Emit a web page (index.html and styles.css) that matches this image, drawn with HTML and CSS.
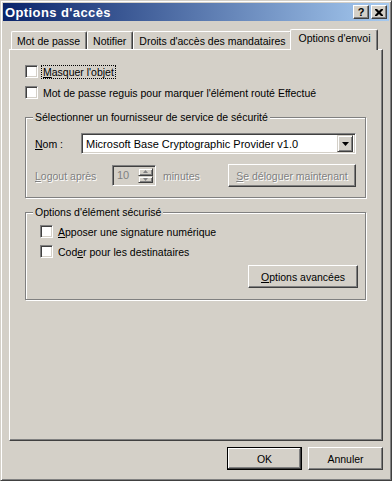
FILE: index.html
```html
<!DOCTYPE html>
<html lang="fr">
<head>
    <meta charset="UTF-8">
    <meta name="viewport" content="width=device-width, initial-scale=1.0">
    <title>Options d'accès</title>
    <link rel="stylesheet" href="styles.css">
</head>
<body>
    <div class="window">
        <div class="titlebar">
            <span class="title">Options d'accès</span>
            <div class="title-buttons">
                <span class="tbtn help">?</span>
                <span class="tbtn">
                    <svg width="8" height="7" viewBox="0 0 8 7"><path d="M0 0h2l2 2 2-2h2v1l-2.5 2.5 2.5 2.5v1h-2l-2-2-2 2h-2v-1l2.5-2.5-2.5-2.5z" fill="#000"/></svg>
                </span>
            </div>
        </div>

        <div class="dialog">
            <div class="tabs">
                <div class="tab">Mot de passe</div>
                <div class="tab">Notifier</div>
                <div class="tab">Droits d'accès des mandataires</div>
                <div class="tab active">Options d'envoi</div>
            </div>

            <div class="panel">
                <label class="check">
                    <span class="box"></span>
                    <span class="focus"><u>M</u>asquer l'objet</span>
                </label>
                <label class="check second">
                    <span class="box"></span>
                    <span>Mot de passe reguis pour marquer l'élément routé Effectué</span>
                </label>

                <fieldset class="group provider">
                    <legend>Sélectionner un fournisseur de service de sécurité</legend>
                    <div class="group-body">
                        <div class="row">
                            <span class="lbl name-lbl"><u>N</u>om :</span>
                            <div class="combo">
                                <span class="combo-text">Microsoft Base Cryptographic Provider v1.0</span>
                                <span class="combo-btn">
                                    <svg width="7" height="4" viewBox="0 0 7 4"><path d="M0 0h7l-3.5 4z" fill="#000"/></svg>
                                </span>
                            </div>
                        </div>
                        <div class="row logout">
                            <span class="lbl logout-lbl disabled"><u>L</u>ogout après</span>
                            <div class="spin">
                                <span class="spin-text">10</span>
                                <span class="spin-btns">
                                    <span class="sb"><svg width="5" height="3" viewBox="0 0 5 3"><path d="M2.5 0l2.5 3h-5z" fill="#808080"/></svg></span>
                                    <span class="sb"><svg width="5" height="3" viewBox="0 0 5 3"><path d="M0 0h5l-2.5 3z" fill="#808080"/></svg></span>
                                </span>
                            </div>
                            <span class="minutes disabled">minutes</span>
                            <button class="btn logout-btn disabled"><u>S</u>e déloguer maintenant</button>
                        </div>
                    </div>
                </fieldset>

                <fieldset class="group secure">
                    <legend>Options d'élément sécurisé</legend>
                    <div class="group-body">
                        <label class="check">
                            <span class="box"></span>
                            <span><u>A</u>pposer une signature numérique</span>
                        </label>
                        <label class="check third">
                            <span class="box"></span>
                            <span>Cod<u>e</u>r pour les destinataires</span>
                        </label>
                        <div class="group-actions">
                            <button class="btn advanced"><u>O</u>ptions avancées</button>
                        </div>
                    </div>
                </fieldset>
            </div>

            <div class="footer">
                <button class="btn default">OK</button>
                <button class="btn">Annuler</button>
            </div>
        </div>
    </div>
</body>
</html>
```

FILE: styles.css
```css
* {
    margin: 0;
    padding: 0;
    box-sizing: border-box;
}
body {
    width: 392px;
    height: 481px;
    overflow: hidden;
    background: #d4d0c8;
    font-family: "Liberation Sans", Arial, sans-serif;
    font-size: 10.5px;
    color: #000;
}
u {
    text-decoration: underline;
    text-underline-offset: 1px;
}

/* window frame */
.window {
    width: 392px;
    height: 481px;
    border: 1px solid;
    border-color: #d4d0c8 #404040 #404040 #d4d0c8;
    box-shadow: inset 1px 1px 0 #fff, inset -1px -1px 0 #808080;
    padding: 2px;
}
.titlebar {
    height: 18px;
    display: flex;
    align-items: center;
    justify-content: space-between;
    padding: 0 2px 0 2px;
    background: linear-gradient(to right, #0a246a, #a6caf0);
}
.title {
    color: #fff;
    font-weight: bold;
    font-size: 13px;
    letter-spacing: 0.4px;
}
.title-buttons {
    display: flex;
    gap: 2px;
}
.tbtn {
    width: 16px;
    height: 14px;
    display: flex;
    align-items: center;
    justify-content: center;
    background: #d4d0c8;
    border: 1px solid;
    border-color: #fff #404040 #404040 #fff;
    box-shadow: inset -1px -1px 0 #808080;
}
.tbtn.help {
    font-weight: bold;
    font-size: 11px;
    line-height: 1;
}

/* dialog */
.dialog {
    padding: 8px 6px 0 6px;
}
.tabs {
    display: flex;
    align-items: flex-end;
    height: 20px;
    padding-left: 2px;
}
.tab {
    height: 18px;
    padding: 2px 6px 0 5px;
    line-height: 14px;
    white-space: nowrap;
    border-top: 1px solid #fff;
    border-left: 1px solid #fff;
    border-right: 1px solid #404040;
    border-top-left-radius: 2px;
    border-top-right-radius: 2px;
    box-shadow: inset -1px 0 0 #808080;
}
.tab.active {
    position: relative;
    z-index: 1;
    height: 21px;
    margin: 0 -2px -1px -2px;
    padding: 1px 6px 0 7px;
    background: #d4d0c8;
}

.panel {
    height: 392px;
    border: 1px solid;
    border-color: #fff #404040 #404040 #fff;
    box-shadow: inset -1px -1px 0 #808080;
    padding: 15px 15px 0 15px;
}

/* checkboxes */
.check {
    display: flex;
    align-items: center;
    gap: 5px;
    height: 13px;
    white-space: nowrap;
}
.check.second {
    margin-top: 8px;
}
.check.third {
    margin-top: 7px;
}
.box {
    width: 13px;
    height: 13px;
    flex: none;
    background: #fff;
    border: 1px solid;
    border-color: #808080 #fff #fff #808080;
    box-shadow: inset 1px 1px 0 #404040, inset -1px -1px 0 #d4d0c8;
}
.focus {
    outline: 1px dotted #000;
    padding: 0 1px;
    margin-left: -1px;
}

/* group boxes */
.group {
    width: 341px;
    border: 1px solid #808080;
    box-shadow: 1px 1px 0 #fff, inset 1px 1px 0 #fff;
    padding: 0;
}
.group legend {
    margin-left: 7px;
    padding: 0 2px;
    line-height: 13px;
    background: #d4d0c8;
}
.provider {
    margin-top: 12px;
}
.provider .group-body {
    padding: 9px 9px 10px 9px;
}
.secure {
    margin-top: 8px;
}
.secure .group-body {
    padding: 6px 7px 11px 14px;
}

.row {
    display: flex;
    align-items: center;
}
.row.logout {
    margin-top: 10px;
    height: 23px;
}
.lbl {
    flex: none;
}
.name-lbl {
    width: 46px;
}
.logout-lbl {
    width: 77px;
}
.disabled {
    color: #808080;
    text-shadow: 1px 1px 0 #fff;
}

.combo {
    flex: 1;
    height: 21px;
    display: flex;
    align-items: center;
    background: #fff;
    border: 1px solid;
    border-color: #808080 #fff #fff #808080;
    box-shadow: inset 1px 1px 0 #404040, inset -1px -1px 0 #d4d0c8;
    padding: 2px 2px 2px 4px;
}
.combo-text {
    flex: 1;
    white-space: nowrap;
    font-size: 11px;
}
.combo-btn {
    width: 16px;
    height: 17px;
    display: flex;
    align-items: center;
    justify-content: center;
    background: #d4d0c8;
    border: 1px solid;
    border-color: #d4d0c8 #404040 #404040 #d4d0c8;
    box-shadow: inset 1px 1px 0 #fff, inset -1px -1px 0 #808080;
}

.spin {
    width: 44px;
    height: 21px;
    display: flex;
    background: #d4d0c8;
    border: 1px solid;
    border-color: #808080 #fff #fff #808080;
    box-shadow: inset 1px 1px 0 #404040, inset -1px -1px 0 #d4d0c8;
    padding: 2px;
}
.spin-text {
    flex: 1;
    padding-left: 2px;
    line-height: 15px;
    font-size: 11px;
    color: #808080;
}
.spin-btns {
    width: 15px;
    display: flex;
    flex-direction: column;
}
.sb {
    flex: 1;
    display: flex;
    align-items: center;
    justify-content: center;
    border: 1px solid;
    border-color: #d4d0c8 #404040 #404040 #d4d0c8;
    box-shadow: inset 1px 1px 0 #fff, inset -1px -1px 0 #808080;
}
.minutes {
    margin-left: 7px;
}

/* push buttons */
.btn {
    height: 23px;
    background: #d4d0c8;
    font-family: inherit;
    font-size: 10.5px;
    color: #000;
    border: 1px solid;
    border-color: #fff #404040 #404040 #fff;
    box-shadow: inset -1px -1px 0 #808080;
    white-space: nowrap;
}
.btn.disabled {
    color: #808080;
}
.logout-btn {
    width: 128px;
    margin-left: auto;
}
.group-actions {
    display: flex;
    justify-content: flex-end;
    margin-top: 7px;
}
.advanced {
    width: 110px;
}
.footer {
    display: flex;
    justify-content: flex-end;
    gap: 6px;
    margin-top: 6px;
}
.footer .btn {
    width: 75px;
}
.btn.default {
    border: 1px solid #000;
    box-shadow: inset -1px -1px 0 #404040, inset 1px 1px 0 #fff, inset -2px -2px 0 #808080;
}
```
